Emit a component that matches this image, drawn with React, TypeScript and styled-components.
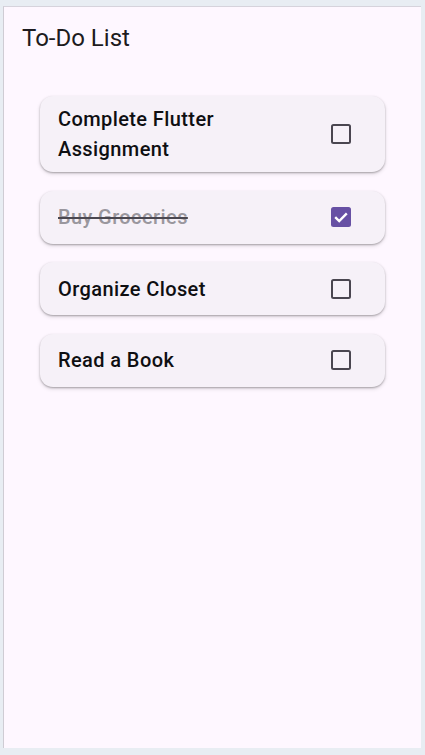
import React, { useState } from "react";
import styled, { createGlobalStyle } from "styled-components";

const Global = createGlobalStyle`
  html, body { margin: 0; padding: 0; background: #e8edf3; }
  body { font-family: Roboto, "Noto Sans", sans-serif; }
  * { box-sizing: border-box; }
`;

const Frame = styled.div`
  margin: 6px 0 0 3px;
  width: 418px;
  height: 742px;
  background: #fef7ff;
  border-top: 1px solid #d6d3dc;
  border-left: 1px solid #cfccd4;
  display: flex;
  flex-direction: column;
`;

const AppBar = styled.header`
  height: 62px;
  display: flex;
  align-items: center;
  padding-left: 18px;
  font-size: 24px;
  color: #1d1b20;
  font-weight: 400;
`;

const List = styled.div`
  display: flex;
  flex-direction: column;
  gap: 18.5px;
  padding: 27px 36px 0 36px;
`;

const Card = styled.div`
  background: #f6f1f8;
  border-radius: 13px;
  box-shadow: 0 1px 2px rgba(0,0,0,0.28), 0 2px 4px rgba(0,0,0,0.12);
  min-height: 53px;
  padding: 8px 34px 8px 18px;
  display: flex;
  align-items: center;
  justify-content: space-between;
  gap: 16px;
`;

const Title = styled.span<{ $done: boolean }>`
  font-size: 20px;
  font-weight: 500;
  letter-spacing: 0.4px;
  line-height: 30px;
  color: ${(p) => (p.$done ? "#9a979e" : "#0f0f12")};
  text-decoration: ${(p) => (p.$done ? "line-through" : "none")};
  text-decoration-color: #4a4750;
  text-decoration-thickness: 1.5px;
  max-width: 240px;
`;

const Box = styled.button<{ $checked: boolean }>`
  flex: none;
  width: 20px;
  height: 20px;
  padding: 0;
  border-radius: 2.5px;
  border: ${(p) => (p.$checked ? "none" : "2.5px solid #4a4650")};
  background: ${(p) => (p.$checked ? "#6750a4" : "transparent")};
  display: flex;
  align-items: center;
  justify-content: center;
  cursor: pointer;
`;

const initial = [
  { title: "Complete Flutter Assignment", done: false },
  { title: "Buy Groceries", done: true },
  { title: "Organize Closet", done: false },
  { title: "Read a Book", done: false },
];

export default function App() {
  const [items, setItems] = useState(initial);
  return (
    <>
      <Global />
      <Frame>
        <AppBar>To-Do List</AppBar>
        <List>
          {items.map((it, i) => (
            <Card key={it.title}>
              <Title $done={it.done}>{it.title}</Title>
              <Box
                $checked={it.done}
                onClick={() =>
                  setItems(items.map((x, j) => (j === i ? { ...x, done: !x.done } : x)))
                }
              >
                {it.done && (
                  <svg width="20" height="20" viewBox="0 0 20 20">
                    <path d="M4.2 10.2 L8.2 14 L15.8 6.4" fill="none" stroke="#fff" strokeWidth="2.4" />
                  </svg>
                )}
              </Box>
            </Card>
          ))}
        </List>
      </Frame>
    </>
  );
}
